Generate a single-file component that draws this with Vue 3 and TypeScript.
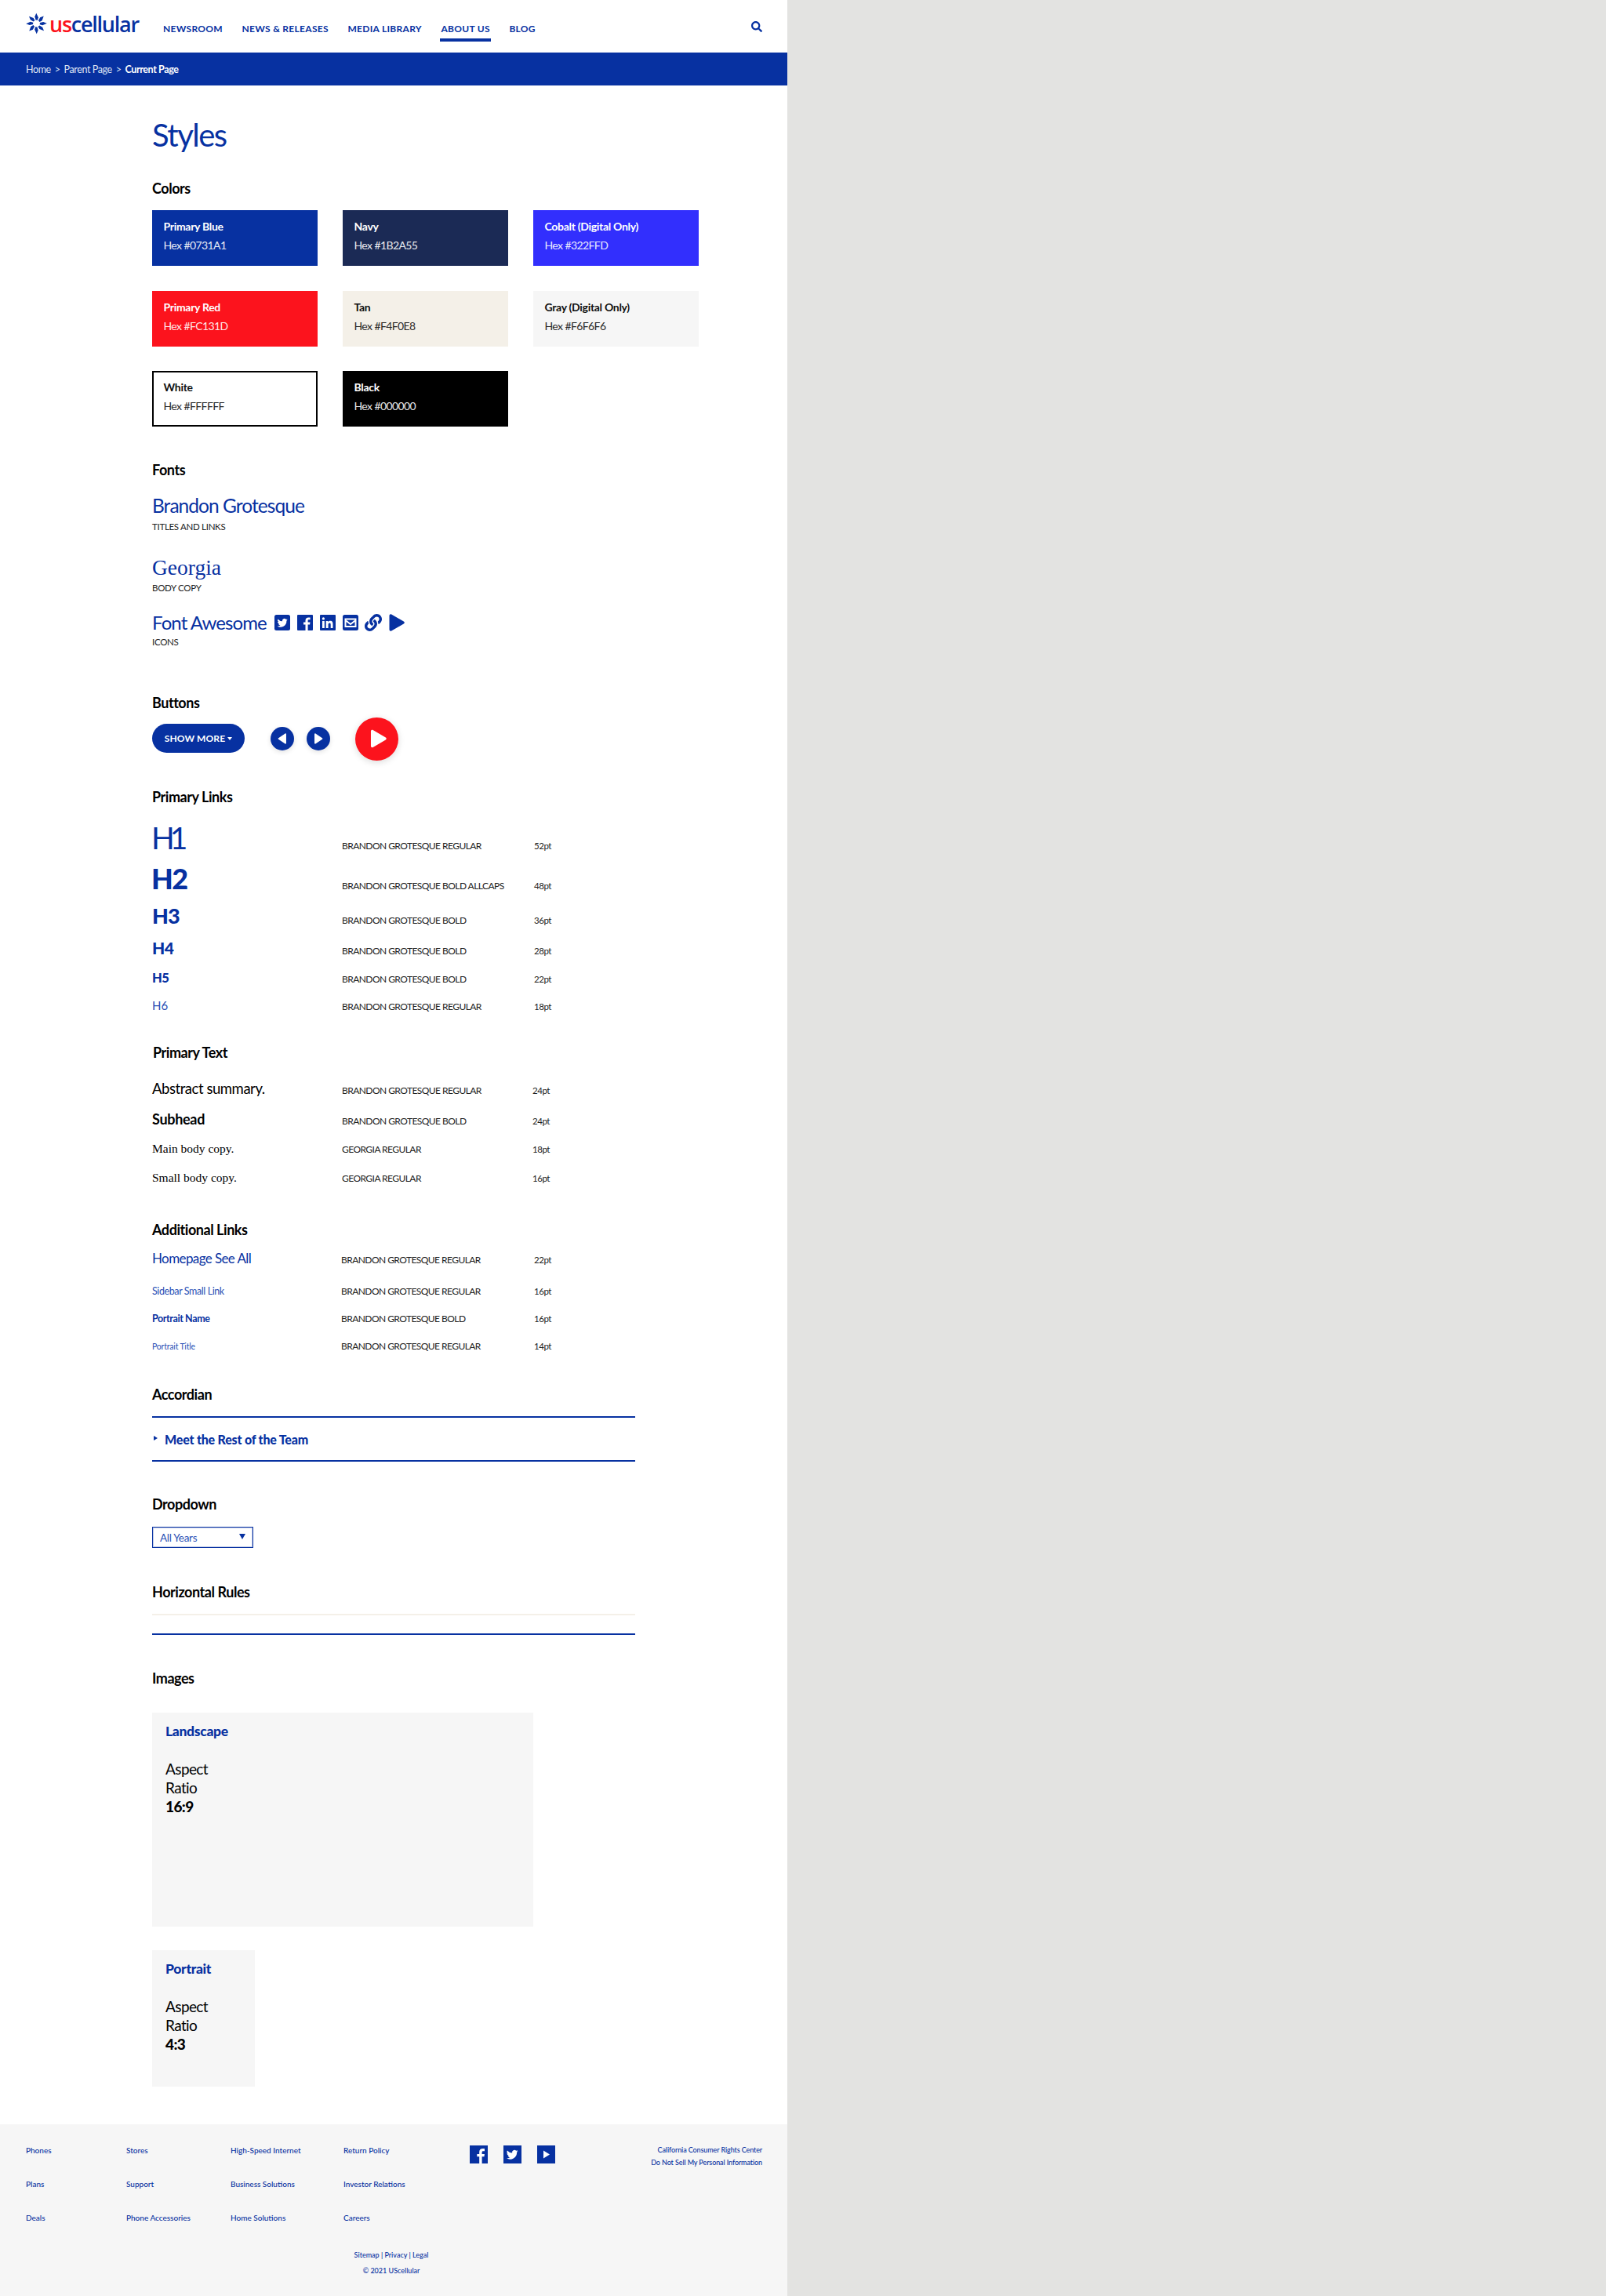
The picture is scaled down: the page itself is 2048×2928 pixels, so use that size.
<script setup lang="ts">
interface Swatch { name: string; hex: string; cls: string }
interface SpecRow { label: string; cls: string; spec: string; size: string }

const swatches: Swatch[] = [
  { name: 'Primary Blue', hex: 'Hex #0731A1', cls: 'sw-blue' },
  { name: 'Navy', hex: 'Hex #1B2A55', cls: 'sw-navy' },
  { name: 'Cobalt (Digital Only)', hex: 'Hex #322FFD', cls: 'sw-cobalt' },
  { name: 'Primary Red', hex: 'Hex #FC131D', cls: 'sw-red' },
  { name: 'Tan', hex: 'Hex #F4F0E8', cls: 'sw-tan' },
  { name: 'Gray (Digital Only)', hex: 'Hex #F6F6F6', cls: 'sw-gray' },
  { name: 'White', hex: 'Hex #FFFFFF', cls: 'sw-white' },
  { name: 'Black', hex: 'Hex #000000', cls: 'sw-black' }
]
const nav = ['NEWSROOM', 'NEWS & RELEASES', 'MEDIA LIBRARY', 'ABOUT US', 'BLOG']
const heads: SpecRow[] = [
  { label: 'H1', cls: 'h1', spec: 'BRANDON GROTESQUE REGULAR', size: '52pt' },
  { label: 'H2', cls: 'h2', spec: 'BRANDON GROTESQUE BOLD ALLCAPS', size: '48pt' },
  { label: 'H3', cls: 'h3', spec: 'BRANDON GROTESQUE BOLD', size: '36pt' },
  { label: 'H4', cls: 'h4', spec: 'BRANDON GROTESQUE BOLD', size: '28pt' },
  { label: 'H5', cls: 'h5', spec: 'BRANDON GROTESQUE BOLD', size: '22pt' },
  { label: 'H6', cls: 'h6', spec: 'BRANDON GROTESQUE REGULAR', size: '18pt' }
]
const texts: SpecRow[] = [
  { label: 'Abstract summary.', cls: 't1', spec: 'BRANDON GROTESQUE REGULAR', size: '24pt' },
  { label: 'Subhead', cls: 't2', spec: 'BRANDON GROTESQUE BOLD', size: '24pt' },
  { label: 'Main body copy.', cls: 't3', spec: 'GEORGIA REGULAR', size: '18pt' },
  { label: 'Small body copy.', cls: 't4', spec: 'GEORGIA REGULAR', size: '16pt' }
]
const links: SpecRow[] = [
  { label: 'Homepage See All', cls: 'l1', spec: 'BRANDON GROTESQUE REGULAR', size: '22pt' },
  { label: 'Sidebar Small Link', cls: 'l2', spec: 'BRANDON GROTESQUE REGULAR', size: '16pt' },
  { label: 'Portrait Name', cls: 'l3', spec: 'BRANDON GROTESQUE BOLD', size: '16pt' },
  { label: 'Portrait Title', cls: 'l4', spec: 'BRANDON GROTESQUE REGULAR', size: '14pt' }
]
const footerCols: { x: string; items: string[] }[] = [
  { x: 'c1', items: ['Phones', 'Plans', 'Deals'] },
  { x: 'c2', items: ['Stores', 'Support', 'Phone Accessories'] },
  { x: 'c3', items: ['High-Speed Internet', 'Business Solutions', 'Home Solutions'] },
  { x: 'c4', items: ['Return Policy', 'Investor Relations', 'Careers'] }
]
const star = [0, 45, 90, 135, 180, 225, 270, 315]
</script>

<template>
  <div class="page">
    <div class="sheet">
      <header class="top">
        <div class="logo">
          <svg class="star" viewBox="0 0 28 28" width="27" height="28">
            <path v-for="a in star" :key="a" :transform="`rotate(${a} 14 14)`" d="M13.8 0.2 L16.4 6 L15.4 9.6 L13 9.4 L11.8 5 Z" fill="#0731A1" />
          </svg>
          <span class="wordmark"><span class="us">us</span>cellular</span>
        </div>
        <nav class="nav">
          <a v-for="n in nav" :key="n" :class="{ on: n === 'ABOUT US' }">{{ n }}</a>
        </nav>
        <svg class="search" viewBox="0 0 512 512" width="14" height="14">
          <path fill="#0731A1" d="M505 442.7L405.3 343c-4.5-4.5-10.6-7-17-7H372c27.6-35.3 44-79.7 44-128C416 93.1 322.9 0 208 0S0 93.1 0 208s93.1 208 208 208c48.3 0 92.7-16.4 128-44v16.3c0 6.4 2.5 12.5 7 17l99.7 99.7c9.4 9.4 24.6 9.4 33.9 0l28.3-28.3c9.4-9.4 9.4-24.6.1-34zM208 336c-70.7 0-128-57.2-128-128 0-70.7 57.2-128 128-128 70.7 0 128 57.2 128 128 0 70.7-57.2 128-128 128z" />
        </svg>
      </header>
      <div class="crumbs">
        <span>Home</span><i>&gt;</i><span>Parent Page</span><i>&gt;</i><b>Current Page</b>
      </div>

      <main class="main">
        <h1 class="title">Styles</h1>

        <h2 class="sec sec-colors">Colors</h2>
        <div class="swatches">
          <div v-for="s in swatches" :key="s.name" class="swatch" :class="s.cls">
            <strong>{{ s.name }}</strong>
            <span>{{ s.hex }}</span>
          </div>
        </div>

        <h2 class="sec sec-fonts">Fonts</h2>
        <div class="font-name f-brandon">Brandon Grotesque</div>
        <div class="font-note n1">TITLES AND LINKS</div>
        <div class="font-name f-georgia">Georgia</div>
        <div class="font-note n2">BODY COPY</div>
        <div class="fa-row">
          <span class="font-name f-fa">Font Awesome</span>
          <svg viewBox="0 0 20 20" width="20" height="20" class="ic"><rect width="20" height="20" rx="2.5" fill="#0731A1" /><path fill="#fff" d="M16.6 6.2c-.5.2-1 .4-1.500.4.500-.3 1-.8 1.200-1.400-.500.3-1.100.5-1.700.6a2.700 2.700 0 0 0-4.600 2.500 7.700 7.700 0 0 1-5.600-2.800 2.700 2.700 0 0 0 .800 3.600c-.400 0-.800-.100-1.200-.300 0 1.300.900 2.400 2.200 2.700-.400.100-.800.100-1.200 0 .300 1.100 1.300 1.800 2.500 1.900a5.400 5.400 0 0 1-4 1.100 7.700 7.700 0 0 0 11.900-6.800c.500-.400 1-.900 1.300-1.500z" /></svg>
          <svg viewBox="0 0 20 20" width="20" height="20" class="ic"><rect width="20" height="20" rx="1" fill="#0731A1" /><path fill="#fff" d="M13.600 20v-7.500h2.500l.4-3h-2.900V7.700c0-.9.200-1.400 1.400-1.400h1.600V3.600c-.3 0-1.200-.1-2.300-.1-2.300 0-3.800 1.400-3.800 3.900v2.100H8v3h2.500V20z" /></svg>
          <svg viewBox="0 0 20 20" width="20" height="20" class="ic"><rect width="20" height="20" rx="1" fill="#0731A1" /><path fill="#fff" d="M3 8h2.800v9H3zM4.400 3.300a1.600 1.600 0 1 1 0 3.300 1.600 1.600 0 0 1 0-3.300zM7.700 8h2.700v1.200c.4-.7 1.300-1.400 2.700-1.400 2.900 0 3.400 1.900 3.400 4.400V17h-2.800v-4.300c0-1 0-2.300-1.400-2.300s-1.700 1.100-1.700 2.200V17H7.700z" /></svg>
          <svg viewBox="0 0 20 20" width="20" height="20" class="ic"><rect width="20" height="20" rx="2.500" fill="#0731A1" /><path fill="none" stroke="#fff" stroke-width="2" d="M3.500 5.500h13v9.500h-13zM3.500 7l6.500 5 6.500-5" /></svg>
          <svg viewBox="0 0 512 512" width="22" height="22" class="ic ic-link"><path fill="#0731A1" d="M326.600 185.400c59.700 59.800 58.900 155.700.4 214.600l-67.200 67.200c-59.300 59.300-155.700 59.300-215 0s-59.300-155.700 0-215l37.100-37.100c9.800-9.800 26.800-3.300 27.300 10.600.6 17.700 3.800 35.500 9.700 52.700 2 5.800.6 12.300-3.800 16.600l-13.100 13.100c-28 28-28.900 73.700-1.100 102 28 28.600 74.100 28.700 102.300.5l67.200-67.200c28.200-28.200 28.100-73.800 0-101.800-3.700-3.700-7.400-6.600-10.300-8.600a16 16 0 0 1-6.900-12.600c-.4-10.600 3.300-21.500 11.700-29.800l21.100-21.100c5.500-5.500 14.200-6.200 20.600-1.700a152.500 152.500 0 0 1 20.500 17.200zM467.500 44.400c-59.300-59.300-155.700-59.300-215 0l-67.200 67.200l-.4.400c-58.600 58.900-59.400 154.800.4 214.600a152.500 152.500 0 0 0 20.500 17.200c6.400 4.500 15.100 3.800 20.600-1.700l21.100-21.100c8.400-8.400 12.100-19.200 11.700-29.800a16 16 0 0 0-6.900-12.600c-2.900-2-6.600-4.900-10.300-8.600-28.100-28.100-28.200-73.600 0-101.800l67.200-67.200c28.200-28.200 74.300-28.100 102.300.5 27.800 28.300 26.900 74 -1.100 102l-13.100 13.100c-4.400 4.400-5.800 10.800-3.800 16.600 5.900 17.200 9.100 35 9.700 52.700.5 13.900 17.500 20.400 27.300 10.600l37.100-37.100c59.300-59.300 59.300-155.700 0-215z" /></svg>
          <svg viewBox="0 0 20 22" width="20" height="22" class="ic"><path fill="#0731A1" d="M.5 2.200C.5.600 1.800-.2 3.200.5l15.600 9c1.400.8 1.400 2.200 0 3l-15.600 9c-1.400.7-2.700-.1-2.700-1.700z" /></svg>
        </div>
        <div class="font-note n3">ICONS</div>

        <h2 class="sec sec-buttons">Buttons</h2>
        <div class="btn-row">
          <a class="pill">SHOW MORE <em></em></a>
          <span class="round r1"><svg viewBox="0 0 14 16" width="12" height="14"><path fill="#fff" d="M12.800 1.300v13.400c0 .8-.9 1.300-1.600.9L1.300 9c-.7-.4-.7-1.500 0-1.900L11.200.4c.7-.4 1.600.1 1.600.9z" /></svg></span>
          <span class="round r2"><svg viewBox="0 0 14 16" width="12" height="14"><path fill="#fff" d="M1.200 1.300v13.400c0 .8.900 1.300 1.600.9L12.700 9c.7-.4.700-1.500 0-1.900L2.800.4c-.7-.4-1.600.1-1.600.9z" /></svg></span>
          <span class="play"><svg viewBox="0 0 22 24" width="21" height="24"><path fill="#fff" d="M1 2v20c0 1.500 1.600 2.300 2.800 1.500l17-10c1.200-.8 1.200-2.300 0-3l-17-10C2.600-.2 1 .6 1 2z" /></svg></span>
        </div>

        <h2 class="sec sec-links">Primary Links</h2>
        <div v-for="r in heads" :key="r.label" class="spec" :class="'row-' + r.cls">
          <span class="sample" :class="r.cls">{{ r.label }}</span>
          <span class="spec-name">{{ r.spec }}</span>
          <span class="spec-size">{{ r.size }}</span>
        </div>

        <h2 class="sec sec-text">Primary Text</h2>
        <div v-for="r in texts" :key="r.label" class="spec spec-t" :class="'row-' + r.cls">
          <span class="sample" :class="r.cls">{{ r.label }}</span>
          <span class="spec-name">{{ r.spec }}</span>
          <span class="spec-size">{{ r.size }}</span>
        </div>

        <h2 class="sec sec-add">Additional Links</h2>
        <div v-for="r in links" :key="r.label" class="spec spec-l" :class="'row-' + r.cls">
          <span class="sample" :class="r.cls">{{ r.label }}</span>
          <span class="spec-name">{{ r.spec }}</span>
          <span class="spec-size">{{ r.size }}</span>
        </div>

        <h2 class="sec sec-acc">Accordian</h2>
        <div class="accordion"><em></em><span>Meet the Rest of the Team</span></div>

        <h2 class="sec sec-drop">Dropdown</h2>
        <div class="select"><span>All Years</span><em></em></div>

        <h2 class="sec sec-hr">Horizontal Rules</h2>
        <hr class="hr-tan" />
        <hr class="hr-blue" />

        <h2 class="sec sec-img">Images</h2>
        <div class="img landscape">
          <h3>Landscape</h3>
          <p>Aspect<br />Ratio<br /><b>16:9</b></p>
        </div>
        <div class="img portrait">
          <h3>Portrait</h3>
          <p>Aspect<br />Ratio<br /><b>4:3</b></p>
        </div>
      </main>

      <footer class="foot">
        <div class="foot-top">
          <div v-for="c in footerCols" :key="c.x" class="fcol" :class="c.x">
            <a v-for="i in c.items" :key="i">{{ i }}</a>
          </div>
          <div class="social">
            <svg viewBox="0 0 23 23" width="23" height="23"><rect width="23" height="23" fill="#0731A1" /><path fill="#fff" d="M15.600 23v-8.700h2.900l.4-3.400h-3.300V8.800c0-1 .3-1.600 1.700-1.600h1.700v-3c-.3 0-1.300-.1-2.500-.1-2.500 0-4.300 1.500-4.300 4.400v2.400H9.300v3.400h2.900V23z" /></svg>
            <svg viewBox="0 0 23 23" width="23" height="23"><rect width="23" height="23" fill="#0731A1" /><path fill="#fff" d="M18.500 7.200c-.5.200-1.100.4-1.700.5.600-.4 1.100-.9 1.300-1.600-.6.300-1.200.6-1.900.7a3 3 0 0 0-5.100 2.700 8.500 8.500 0 0 1-6.200-3.100 3 3 0 0 0 .9 4c-.5 0-.9-.1-1.300-.4 0 1.500 1 2.700 2.400 3-.4.100-.9.100-1.300 0 .4 1.200 1.500 2 2.800 2.100a6 6 0 0 1-4.400 1.200 8.500 8.500 0 0 0 13.100-7.500c.6-.4 1.100-1 1.400-1.600z" /></svg>
            <svg viewBox="0 0 23 23" width="23" height="23"><rect width="23" height="23" fill="#0731A1" /><path fill="#fff" d="M8 6.500v10l8-5z" /></svg>
          </div>
          <div class="legal">
            <a>California Consumer Rights Center</a>
            <a>Do Not Sell My Personal Information</a>
          </div>
        </div>
        <div class="foot-bottom">
          <a>Sitemap | Privacy | Legal</a>
          <a>© 2021 UScellular</a>
        </div>
      </footer>
    </div>
  </div>
</template>

<style>
html, body { margin: 0; padding: 0; background: #e3e3e1; }
</style>

<style scoped>
.page { width: 2048px; height: 2928px; background: #e3e3e1; overflow: hidden; font-family: Lato, "Open Sans", sans-serif; }
.sheet { width: 1004px; height: 2928px; background: #fff; display: flex; flex-direction: column; color: #000; }
a { color: inherit; text-decoration: none; }
h1, h2, h3, p { margin: 0; }

.top { height: 67px; display: flex; align-items: flex-start; padding: 0 32px 0 33px; box-sizing: border-box; }
.logo { display: flex; align-items: flex-start; margin-top: 16px; height: 29px; width: 144px; flex: none; }
.star { display: block; }
.wordmark { font-family: "Open Sans", sans-serif; font-size: 27px; font-weight: 600; letter-spacing: -1.25px; color: #0731a1; margin-left: 3px; line-height: 30px; white-space: nowrap; }
.us { color: #fc131d; }
.nav { display: flex; gap: 22.5px; margin-left: 30px; }
.nav a { display: block; height: 53px; box-sizing: border-box; padding: 29px 1px 0; font-size: 12px; line-height: 16px; font-weight: 700; letter-spacing: .3px; color: #0731a1; white-space: nowrap; }
.nav a.on { border-bottom: 4px solid #0731a1; }
.search { margin: 27px 0 0 auto; }

.crumbs { height: 42px; background: #0731a1; color: #dfe5f5; display: flex; align-items: center; padding-left: 33px; font-size: 12.5px; letter-spacing: -.4px; }
.crumbs i { font-style: normal; margin: 0 5px; }
.crumbs b { color: #fff; font-weight: 700; }

.main { padding-left: 194px; flex: 1; }
.title { font-size: 40px; line-height: 48px; margin-top: 39px; font-weight: 400; letter-spacing: -1.5px; color: #0731a1; }
.sec { font-size: 18px; line-height: 20px; font-weight: 700; letter-spacing: -.45px; color: #000; }
.sec-colors { margin-top: 34px; }
.swatches { display: grid; grid-template-columns: repeat(3, 211px); column-gap: 32px; row-gap: 31.5px; margin-top: 18px; }
.swatch { height: 71px; box-sizing: border-box; padding: 12px 14.5px; display: flex; flex-direction: column; gap: 7px; font-size: 14px; line-height: 17px; }
.swatch strong { font-weight: 700; letter-spacing: -.3px; }
.swatch span { letter-spacing: -.6px; opacity: .9; }
.sw-blue { background: #0731a1; color: #fff; }
.sw-navy { background: #1b2a55; color: #fff; }
.sw-cobalt { background: #322ffd; color: #fff; }
.sw-red { background: #fc131d; color: #fff; }
.sw-tan { background: #f4f0e8; color: #111; }
.sw-gray { background: #f6f6f6; color: #111; }
.sw-white { background: #fff; border: 2px solid #000; padding: 10px 12.5px; color: #111; }
.sw-black { background: #000; color: #fff; }

.sec-fonts { margin-top: 45px; }
.font-name { color: #0731a1; }
.f-brandon { font-size: 24.5px; line-height: 32px; font-weight: 400; letter-spacing: -.95px; margin-top: 20px; }
.f-georgia { font-family: "Liberation Serif", serif; font-size: 27.5px; line-height: 34px; margin-top: 29px; }
.font-note { font-size: 11.5px; line-height: 13px; letter-spacing: -.3px; color: #222; }
.n1 { margin-top: 4px; }
.n2 { margin-top: 2px; }
.n3 { margin-top: 3px; }
.fa-row { display: flex; align-items: center; margin-top: 23px; height: 30px; }
.f-fa { font-size: 24px; line-height: 30px; font-weight: 400; letter-spacing: -.9px; width: 156px; flex: none; white-space: nowrap; }
.ic { margin-right: 9px; flex: none; }
.ic-link { margin-left: -1px; }

.sec-buttons { margin-top: 61px; }
.btn-row { display: flex; align-items: center; margin-top: 8px; height: 56px; }
.pill { width: 118px; height: 37px; margin-top: -1px; border-radius: 19px; background: #0731a1; color: #fff; font-size: 12px; font-weight: 700; letter-spacing: .1px; display: flex; align-items: center; justify-content: center; gap: 3px; }
.pill em { width: 0; height: 0; border-left: 3px solid transparent; border-right: 3px solid transparent; border-top: 4px solid #fff; }
.round { width: 30px; height: 30px; border-radius: 50%; background: #0731a1; display: flex; align-items: center; justify-content: center; box-shadow: 0 2px 6px rgba(0, 0, 0, .12); }
.r1 { margin-left: 33px; }
.r2 { margin-left: 16px; }
.play { width: 55px; height: 55px; margin-left: 32px; border-radius: 50%; background: #fc131d; display: flex; align-items: center; justify-content: center; box-shadow: 0 2px 8px rgba(0, 0, 0, .15); }
.play svg { margin-left: 4px; }

.sec-links { margin-top: 36px; }
.spec { display: grid; grid-template-columns: 242px 245px 60px; align-items: baseline; white-space: nowrap; }
.spec-name { font-size: 12px; line-height: 14px; letter-spacing: -.55px; color: #222; }
.spec-size { font-size: 11.5px; line-height: 14px; letter-spacing: -.45px; color: #222; }
.sample { color: #0731a1; display: block; }

.row-h1 { margin-top: 19px; }
.row-h2 { margin-top: 7px; }
.row-h3 { margin-top: 8px; }
.row-h4 { margin-top: 8px; }
.row-h5 { margin-top: 11px; }
.row-h6 { margin-top: 11px; }
.h1 { font-size: 39px; line-height: 46px; font-weight: 400; letter-spacing: -6px; margin-left: -1px; }
.h2 { font-size: 36px; line-height: 44px; font-weight: 900; letter-spacing: -1.5px; margin-left: -1px; }
.h3 { font-size: 27px; line-height: 36px; font-weight: 900; letter-spacing: -1px; }
.h4 { font-size: 21px; line-height: 30px; font-weight: 900; letter-spacing: -.5px; }
.h5 { font-size: 16.5px; line-height: 24px; font-weight: 900; letter-spacing: -.5px; }
.h6 { font-size: 15px; line-height: 24px; font-weight: 400; color: #2a50b5; }

.sec-text { margin-top: 38px; padding-left: 1px; }
.spec-t .spec-size { margin-left: -2px; }
.row-t1 { margin-top: 24px; }
.row-t2 { margin-top: 15px; }
.row-t3 { margin-top: 14px; }
.row-t4 { margin-top: 13px; }
.t1 { font-size: 18.5px; line-height: 24px; letter-spacing: -.45px; color: #000; }
.t2 { font-size: 18px; line-height: 24px; font-weight: 700; letter-spacing: -.3px; color: #000; }
.t3 { font-family: "Liberation Serif", serif; font-size: 15.5px; line-height: 24px; color: #000; }
.t4 { font-family: "Liberation Serif", serif; font-size: 15.5px; line-height: 24px; color: #000; }

.sec-add { margin-top: 44px; }
.spec-l .spec-name { margin-left: -1px; }
.row-l1 { margin-top: 15px; }
.row-l2 { margin-top: 20px; }
.row-l3 { margin-top: 15px; }
.row-l4 { margin-top: 15px; }
.l1 { font-size: 17px; line-height: 24px; letter-spacing: -.6px; }
.l2 { font-size: 12.5px; line-height: 20px; letter-spacing: -.4px; color: #2a50b5; }
.l3 { font-size: 12.5px; line-height: 20px; font-weight: 700; letter-spacing: -.4px; }
.l4 { font-size: 10.5px; line-height: 20px; letter-spacing: -.2px; color: #2a50b5; }

.sec-acc { margin-top: 41px; }
.accordion { width: 616px; height: 58px; box-sizing: border-box; margin-top: 18px; border-top: 2px solid #0731a1; border-bottom: 2px solid #0731a1; display: flex; align-items: center; color: #0731a1; font-size: 16px; font-weight: 900; letter-spacing: -.2px; }
.accordion em { width: 0; height: 0; border-top: 3px solid transparent; border-bottom: 3px solid transparent; border-left: 5px solid #0731a1; margin: -3px 9px 0 2px; }

.sec-drop { margin-top: 44px; }
.select { width: 129px; height: 27px; box-sizing: border-box; margin-top: 19px; border: 1px solid #0731a1; box-shadow: inset 0 0 0 1px rgba(7, 49, 161, .25); display: flex; align-items: center; justify-content: space-between; padding: 0 9px; font-size: 13.5px; letter-spacing: -.3px; color: #2a50b5; }
.select em { width: 0; height: 0; border-left: 4px solid transparent; border-right: 4px solid transparent; border-top: 7px solid #0731a1; margin-top: -3px; }

.sec-hr { margin-top: 46px; }
hr { border: 0; width: 616px; margin: 0; }
.hr-tan { height: 2px; background: #f4f0e8; margin-top: 18px; }
.hr-blue { height: 2px; background: #0731a1; margin-top: 23px; }

.sec-img { margin-top: 45px; }
.img { background: #f6f6f6; box-sizing: border-box; padding: 13px 17px; }
.img h3 { font-size: 17.5px; line-height: 22px; font-weight: 900; letter-spacing: -.3px; color: #0731a1; }
.img p { margin-top: 25px; font-size: 19px; line-height: 24px; letter-spacing: -.6px; color: #000; }
.img b { font-weight: 900; }
.landscape { width: 486px; height: 273px; margin-top: 34px; }
.portrait { width: 131px; height: 174px; margin-top: 30px; }

.foot { height: 219px; background: #f6f6f6; color: #0731a1; font-size: 10px; font-weight: 500; }
.foot-top { display: flex; padding-top: 25px; height: 134px; }
.fcol { display: flex; flex-direction: column; gap: 27px; line-height: 16px; }
.fcol a { white-space: nowrap; }
.c1 { margin-left: 33px; width: 128px; }
.c2 { width: 133px; }
.c3 { width: 144px; }
.c4 { width: 161px; }
.social { display: flex; gap: 20px; margin-top: 2px; height: 23px; }
.social svg { display: block; }
.legal { margin-left: auto; padding-right: 32px; display: flex; flex-direction: column; align-items: flex-end; line-height: 16px; font-size: 9px; letter-spacing: -.1px; }
.foot-bottom { display: flex; flex-direction: column; align-items: center; margin-left: -6px; gap: 4px; line-height: 16px; font-size: 9px; }
</style>
